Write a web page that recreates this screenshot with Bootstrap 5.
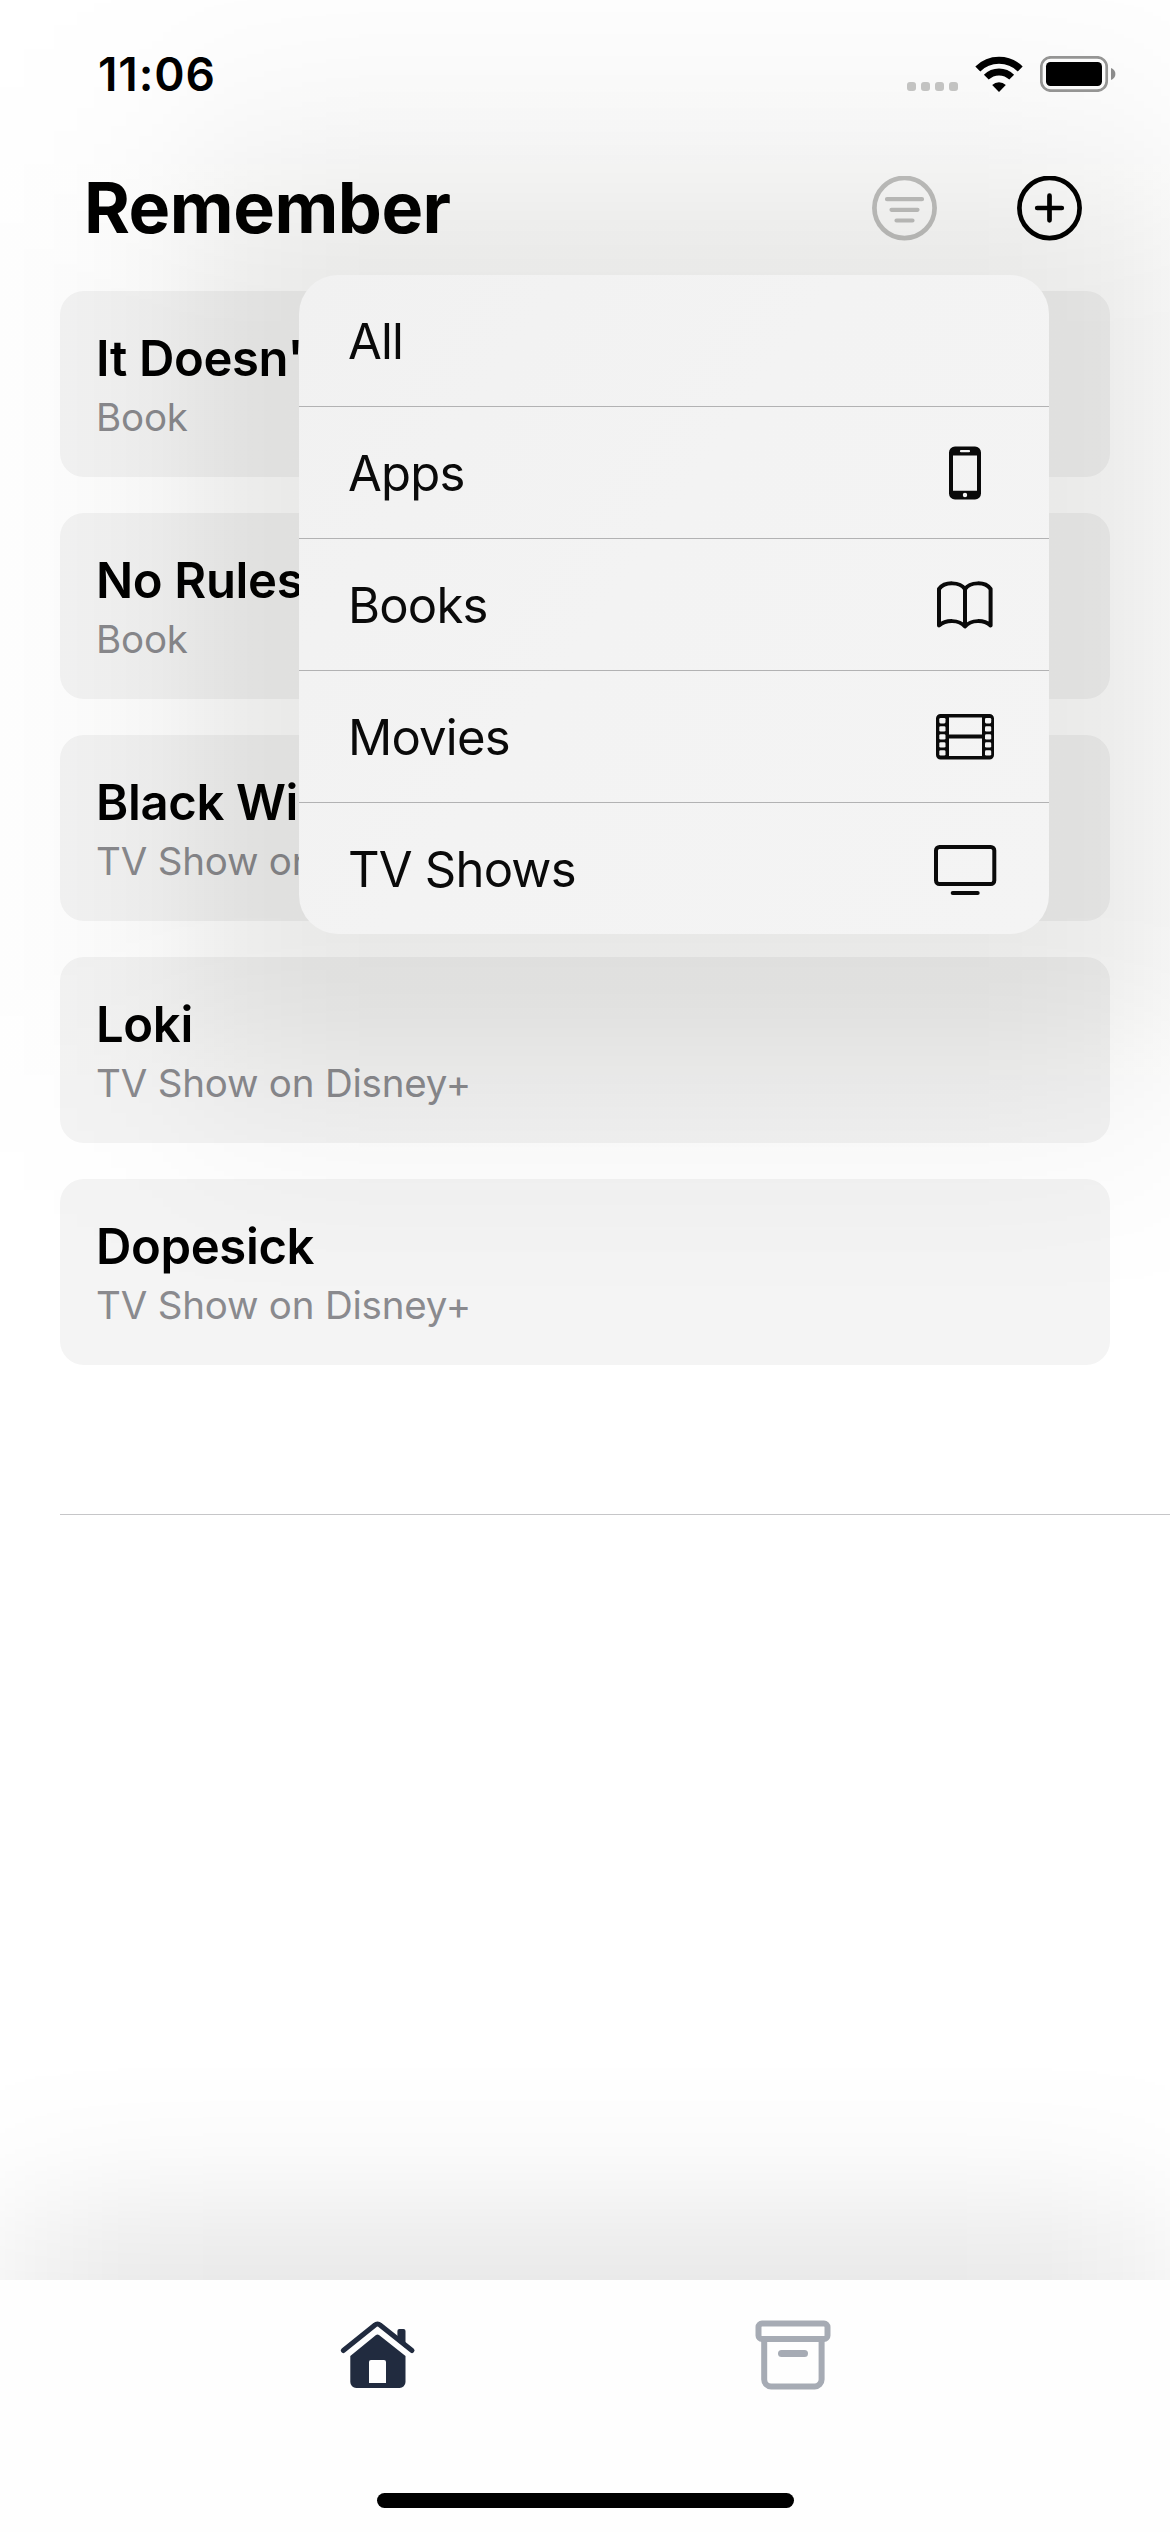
<!DOCTYPE html>
<html lang="en">
<head>
<meta charset="utf-8">
<meta name="viewport" content="width=device-width, initial-scale=1">
<title>Remember</title>
<link href="https://cdn.jsdelivr.net/npm/bootstrap@5.3.0/dist/css/bootstrap.min.css" rel="stylesheet">
<style>
  body { font-family: Inter, "Liberation Sans", sans-serif; color: #000; background: #fff; }
  svg { display: block; flex: none; }
  .screen { height: 2532px; }
  .status-bar { height: 148px; padding: 0 54px 0 98px; }
  .clock { font-size: 46px; font-weight: 600; letter-spacing: .9px; line-height: 1; }
  .status-icons { gap: 17px; }
  .title-bar { height: 120px; padding: 0 88px 0 84px; }
  .title-bar h1 { font-size: 70px; font-weight: 700; letter-spacing: -.5px; line-height: 1; }
  .title-actions { gap: 80px; }
  .entries { padding: 23px 60px 0; gap: 36px; }
  .entry { height: 186px; padding: 38px 36px 0; border: 0; border-radius: 24px; background: #f4f4f4; overflow: hidden; white-space: nowrap; }
  .entry h2 { font-size: 49px; font-weight: 600; line-height: 59px; letter-spacing: -.35px; }
  .entry p { font-size: 38.5px; line-height: 58px; color: #8a8a8e; letter-spacing: -.2px; }
  .list-end { margin: 149px 0 0 60px; height: 1px; background: #c6c6c8; }
  /* Wide soft shadows: a horizontal falloff masked by a vertical one */
  .menu-shade { top: -65px; left: -51px; width: 1450px; height: 1369px; z-index: 4; pointer-events: none;
    background: linear-gradient(90deg, rgba(12,12,0,0), rgba(12,12,0,.007) 60px, rgba(12,12,0,.017) 120px, rgba(12,12,0,.028) 170px, rgba(12,12,0,.041) 210px, rgba(12,12,0,.057) 250px, rgba(12,12,0,.074) 290px, rgba(12,12,0,.088) 340px, rgba(12,12,0,.095) 390px, rgba(12,12,0,.097) 430px, rgba(12,12,0,.097) calc(100% - 430px), rgba(12,12,0,.095) calc(100% - 390px), rgba(12,12,0,.088) calc(100% - 340px), rgba(12,12,0,.074) calc(100% - 290px), rgba(12,12,0,.057) calc(100% - 250px), rgba(12,12,0,.041) calc(100% - 210px), rgba(12,12,0,.028) calc(100% - 170px), rgba(12,12,0,.017) calc(100% - 120px), rgba(12,12,0,.007) calc(100% - 60px), rgba(12,12,0,0));
    -webkit-mask-image: linear-gradient(rgba(0,0,0,0), rgba(0,0,0,.07) 60px, rgba(0,0,0,.175) 120px, rgba(0,0,0,.29) 170px, rgba(0,0,0,.42) 210px, rgba(0,0,0,.59) 250px, rgba(0,0,0,.76) 290px, rgba(0,0,0,.91) 340px, rgba(0,0,0,.98) 390px, #000 430px, #000 calc(100% - 430px), rgba(0,0,0,.98) calc(100% - 390px), rgba(0,0,0,.91) calc(100% - 340px), rgba(0,0,0,.76) calc(100% - 290px), rgba(0,0,0,.59) calc(100% - 250px), rgba(0,0,0,.42) calc(100% - 210px), rgba(0,0,0,.29) calc(100% - 170px), rgba(0,0,0,.175) calc(100% - 120px), rgba(0,0,0,.07) calc(100% - 60px), rgba(0,0,0,0)); }
  .tabs-shade { top: 2050px; left: 0; width: 100%; height: 230px; pointer-events: none;
    background: linear-gradient(90deg, rgba(0,0,0,.036), rgba(0,0,0,.05) 40px, rgba(0,0,0,.063) 80px, rgba(0,0,0,.073) 125px, rgba(0,0,0,.079) 175px, rgba(0,0,0,.082) 230px, rgba(0,0,0,.082) calc(100% - 230px), rgba(0,0,0,.079) calc(100% - 175px), rgba(0,0,0,.073) calc(100% - 125px), rgba(0,0,0,.063) calc(100% - 80px), rgba(0,0,0,.05) calc(100% - 40px), rgba(0,0,0,.036));
    -webkit-mask-image: linear-gradient(rgba(0,0,0,0), rgba(0,0,0,.07) 50px, rgba(0,0,0,.2) 95px, rgba(0,0,0,.46) 140px, rgba(0,0,0,.78) 185px, #000); }
  .filter-menu { top: 275px; left: 299px; width: 750px; border-radius: 39px; z-index: 5;
    background: linear-gradient(125deg, #f1f1f1, #f3f3f3 45%, #f4f4f4); }
  .filter-menu .list-group { border-radius: 39px; overflow: hidden; }
  .filter-menu .list-group-item { height: 132px; padding: 2px 49px 0 49px; border: 0; border-bottom: 1px solid #b2b2b3; background: none;
    color: #0a0a0a; font-size: 49px; line-height: 1; letter-spacing: -.8px; }
  .filter-menu .list-group-item:last-child { height: 131px; border-bottom: 0; }
  .glyph { width: 70px; height: 70px; margin-top: -2px; }
  .tabs { height: 252px; background: #fefefe; padding-top: 38px; z-index: 2; }
  .tabs .nav { gap: 335px; }
  .tabs .nav-link { padding: 0; }
  .home-bar { width: 417px; height: 15px; border-radius: 8px; background: #000; margin-bottom: 24px; }
</style>
<script src="https://cdn.jsdelivr.net/npm/bootstrap@5.3.0/dist/js/bootstrap.bundle.min.js"></script>
</head>
<body>
<div class="screen position-relative d-flex flex-column overflow-hidden">

  <div class="status-bar position-relative z-3 d-flex justify-content-between align-items-center">
    <div class="clock">11:06</div>
    <div class="status-icons d-flex align-items-center">
      <svg width="51" height="36" fill="#c8c8c7"><rect y="26" width="9" height="9" rx="3"/><rect x="14" y="26" width="9" height="9" rx="3"/><rect x="28" y="26" width="9" height="9" rx="3"/><rect x="42" y="26" width="9" height="9" rx="3"/></svg>
      <svg width="48" height="36" viewBox="0 0 48 36"><path d="M2.8 12.9a30.2 30.2 0 0 1 42.4 0" fill="none" stroke="#000" stroke-width="7"/><path d="M11.3 21.2a18.1 18.1 0 0 1 25.4 0" fill="none" stroke="#000" stroke-width="6.8"/><path d="M24 36l-6.8-6.9a9.6 9.6 0 0 1 13.6 0z"/></svg>
      <svg width="76" height="36" viewBox="0 0 76 36"><rect x="1.3" y="1.3" width="65.4" height="33.4" rx="9.5" fill="none" stroke="#989897" stroke-width="2.7"/><rect x="6" y="6" width="56" height="24" rx="4.5"/><path d="M71 12q4.4 1.8 4.4 6t-4.4 6z" fill="#8f8f8f"/></svg>
    </div>
  </div>

  <header class="title-bar position-relative z-3 d-flex justify-content-between align-items-center">
    <h1 class="m-0">Remember</h1>
    <div class="title-actions d-flex">
      <svg width="65" height="65" fill="none" stroke="#c2c2c1" stroke-linecap="round"><circle cx="32.5" cy="32" r="30.1" stroke-width="4.7"/><path d="M15 23.200h35M19.5 33.800h26M24.5 44.500h16" stroke-width="4.2"/></svg>
      <svg width="65" height="65" fill="none" stroke="#000" stroke-linecap="round"><circle cx="32.5" cy="32" r="30.1" stroke-width="4.7"/><path d="M20.2 32h24.6M32.5 19.700v24.6" stroke-width="4.7"/></svg>
    </div>
  </header>

  <main class="flex-grow-1">
    <div class="entries d-flex flex-column">
      <article class="card entry"><h2 class="m-0">It Doesn't</h2><p class="m-0">Book</p></article>
      <article class="card entry"><h2 class="m-0">No Rules</h2><p class="m-0">Book</p></article>
      <article class="card entry"><h2 class="m-0">Black Wi</h2><p class="m-0">TV Show on</p></article>
      <article class="card entry"><h2 class="m-0">Loki</h2><p class="m-0">TV Show on Disney+</p></article>
      <article class="card entry"><h2 class="m-0">Dopesick</h2><p class="m-0">TV Show on Disney+</p></article>
    </div>
    <div class="list-end"></div>
  </main>

  <div class="menu-shade position-absolute"></div>
  <div class="tabs-shade position-absolute"></div>

  <!-- Filter popover, floating over the list -->
  <div class="filter-menu position-absolute">
    <div class="list-group">
      <div class="list-group-item d-flex align-items-center justify-content-between">All</div>
      <div class="list-group-item d-flex align-items-center justify-content-between">Apps
        <svg class="glyph" viewBox="0 0 70 70"><path fill="#0a0a0a" fill-rule="evenodd" d="M25 8.5h20a6 6 0 0 1 6 6v41a6 6 0 0 1-6 6h-20a6 6 0 0 1-6-6v-41a6 6 0 0 1 6-6zM23 17.5v35.3h24V17.5zM31 12.1a1 1 0 0 0 0 2.2h8a1 1 0 0 0 0-2.2zM35 54.8a2.2 2.2 0 1 0 0 4.4a2.2 2.2 0 1 0 0-4.4z"/></svg></div>
      <div class="list-group-item d-flex align-items-center justify-content-between">Books
        <svg class="glyph" viewBox="0 0 70 70" fill="none" stroke="#0a0a0a" stroke-width="4" stroke-linejoin="round" stroke-linecap="round"><path d="M35 19C30 12 15 11 9 19V55.500C16 49.500 29 49.500 35 56.500C41 49.500 54 49.500 60.600 55.500V19C55 11 40 12 35 19V56"/></svg></div>
      <div class="list-group-item d-flex align-items-center justify-content-between">Movies
        <svg class="glyph" viewBox="0 0 70 70"><path fill="#0a0a0a" fill-rule="evenodd" d="M10.500 12h49a4.500 4.500 0 0 1 4.500 4.500v36.500a4.500 4.500 0 0 1-4.500 4.500h-49a4.500 4.500 0 0 1-4.500-4.500v-36.500a4.500 4.500 0 0 1 4.500-4.500zM19 15.500v17h33v-17zM19 36.500v17.500h33V36.500z"/><g fill="#f4f4f4"><rect x="9.300" y="16" width="6.200" height="5.400" rx="1.300"/><rect x="9.300" y="24.200" width="6.200" height="5.400" rx="1.300"/><rect x="9.300" y="32.200" width="6.200" height="5.400" rx="1.300"/><rect x="9.300" y="40.200" width="6.200" height="5.400" rx="1.300"/><rect x="9.300" y="48.200" width="6.200" height="5.400" rx="1.300"/><rect x="55" y="16" width="6.200" height="5.400" rx="1.300"/><rect x="55" y="24.200" width="6.200" height="5.400" rx="1.300"/><rect x="55" y="32.200" width="6.200" height="5.400" rx="1.300"/><rect x="55" y="40.200" width="6.200" height="5.400" rx="1.300"/><rect x="55" y="48.200" width="6.200" height="5.400" rx="1.300"/></g></svg></div>
      <div class="list-group-item d-flex align-items-center justify-content-between">TV Shows
        <svg class="glyph" viewBox="0 0 70 70" fill="none" stroke="#0a0a0a" stroke-width="4" stroke-linecap="round"><rect x="6" y="13" width="58.300" height="37" rx="3.500"/><path d="M22.700 59h25"/></svg></div>
    </div>
  </div>

  <footer class="tabs position-relative d-flex flex-column align-items-center justify-content-between">
    <nav class="nav">
      <a class="nav-link" href="#" aria-label="Home">
        <svg width="80" height="76" viewBox="0 0 80 76" fill="#212b3f"><path d="M5.300 32.500L37 7a3.500 3.500 0 0 1 5 0L74 32.500" fill="none" stroke="#212b3f" stroke-width="5" stroke-linecap="round" stroke-linejoin="round"/><path d="M59.400 23V13a2 2 0 0 1 2-2h4.100a2 2 0 0 1 2 2v17z"/><path fill-rule="evenodd" d="M12.300 38L38 17q1.500-1.200 3 0L67.500 38V64a6 6 0 0 1-6 6H18.300a6 6 0 0 1-6-6zM33 42a2 2 0 0 0-2 2V65h17V44a2 2 0 0 0-2-2z"/></svg>
      </a>
      <a class="nav-link" href="#" aria-label="Archive">
        <svg width="80" height="76" viewBox="0 0 80 76" fill="none" stroke="#a6abb4" stroke-width="6"><rect x="5.500" y="5.500" width="69" height="15.500" rx="3.500"/><path d="M11.200 22V61.500a7 7 0 0 0 7 7H61.600a7 7 0 0 0 7-7V22"/><path d="M28.500 35.500h23" stroke-width="7" stroke-linecap="round"/></svg>
      </a>
    </nav>
    <div class="home-bar"></div>
  </footer>
</div>
</body>
</html>
